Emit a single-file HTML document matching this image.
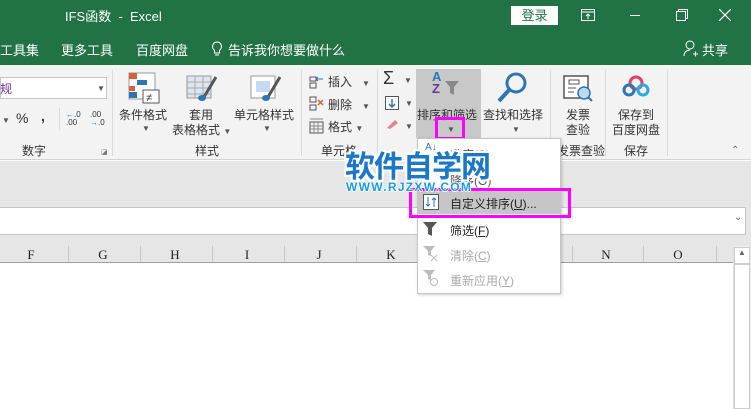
<!DOCTYPE html>
<html><head><meta charset="utf-8"><style>
*{margin:0;padding:0;box-sizing:border-box}
body{width:751px;height:409px;overflow:hidden;position:relative;background:#fff;font-family:"Liberation Sans","Noto Sans CJK SC",sans-serif;font-size:12px;color:#333}
.a{position:absolute;white-space:nowrap}
.g{color:#fff}
.t{font-size:12px;color:#333}
.sep{position:absolute;width:1px;background:#dadada}
.col{position:absolute;top:246px;height:16px;width:1px;background:#c6c6c6}
.ch{position:absolute;top:247px;font-family:"Liberation Serif",serif;font-size:13px;color:#222;width:20px;text-align:center}
.ar{font-size:8px;color:#555}
</style></head><body>
<div class="a" style="left:0;top:0;width:751px;height:65px;background:#217346"></div>
<div class="a g" style="left:65px;top:6px;font-size:13px">IFS函数 &nbsp;- &nbsp;Excel</div>
<div class="a" style="left:511px;top:6px;width:47px;height:19px;background:#fff;color:#217346;font-size:13px;text-align:center;line-height:19px">登录</div>
<svg class="a" style="left:581px;top:9px" width="14" height="12"><rect x="0.5" y="0.5" width="13" height="11" fill="none" stroke="#fff"/><line x1="0" y1="3" x2="14" y2="3" stroke="#fff"/><path d="M7 10V5M5 7l2-2 2 2" stroke="#fff" fill="none"/></svg>
<div class="a" style="left:630px;top:15px;width:10px;height:1px;background:#fff"></div>
<svg class="a" style="left:676px;top:9px" width="12" height="12"><rect x="0.5" y="2.5" width="9" height="9" fill="none" stroke="#fff"/><path d="M2.5 2.5V0.5h9v9h-2" fill="none" stroke="#fff"/></svg>
<svg class="a" style="left:719px;top:9px" width="12" height="12"><path d="M0 0L12 12M12 0L0 12" stroke="#fff" stroke-width="1.2"/></svg>
<div class="a g" style="left:0;top:40px;font-size:13px">工具集</div>
<div class="a g" style="left:61px;top:40px;font-size:13px">更多工具</div>
<div class="a g" style="left:136px;top:40px;font-size:13px">百度网盘</div>
<svg class="a" style="left:211px;top:41px" width="12" height="16"><path d="M6 1a4.5 4.5 0 0 0-2.5 8.2V12h5V9.2A4.5 4.5 0 0 0 6 1zM4 14h4" fill="none" stroke="#fff"/></svg>
<div class="a g" style="left:228px;top:40px;font-size:13px">告诉我你想要做什么</div>
<svg class="a" style="left:683px;top:40px" width="16" height="18"><circle cx="7" cy="5" r="4" fill="none" stroke="#fff"/><path d="M1 16c0-4 3-6 6-6M10 14h5M12.5 11.5v5" fill="none" stroke="#fff"/></svg>
<div class="a g" style="left:702px;top:40px;font-size:13px">共享</div>
<div class="a" style="left:0;top:65px;width:751px;height:95px;background:#f3f3f3;border-bottom:1px solid #d4d4d4"></div>
<div class="a" style="left:0;top:77px;width:107px;height:22px;background:#fff;border:1px solid #c6c6c6"></div>
<div class="a" style="left:0;top:80px;color:#7030a0">规</div>
<div class="a ar" style="left:97px;top:84px">▼</div>
<div class="a ar" style="left:2px;top:116px">▼</div>
<div class="a" style="left:16px;top:110px;font-size:14px">%</div>
<div class="a" style="left:41px;top:108px;font-size:14px;font-weight:bold">,</div>
<div class="sep" style="left:59px;top:108px;height:22px"></div>
<div class="a" style="left:66px;top:111px;font-size:8px;line-height:8px;color:#333"><span style="color:#2e75b6">←</span>.0<br>.00</div>
<div class="a" style="left:90px;top:111px;font-size:8px;line-height:8px;color:#333">.00<br><span style="color:#2e75b6">→</span>.0</div>
<div class="a t" style="left:22px;top:142px">数字</div>
<div class="a" style="left:101px;top:148px;font-size:7px;color:#777">◪</div>
<div class="sep" style="left:112px;top:70px;height:86px"></div>
<svg class="a" style="left:128px;top:72px" width="32" height="32"><rect x="1" y="1" width="26" height="26" fill="#fff" stroke="#999"/><rect x="1" y="1" width="8" height="6" fill="#d9603b"/><rect x="9" y="8" width="10" height="5" fill="#2e75b6"/><rect x="1" y="14" width="6" height="5" fill="#d9603b"/><rect x="1" y="20" width="8" height="6" fill="#2e75b6"/><rect x="15" y="18" width="16" height="13" fill="#fff" stroke="#555"/><text x="18" y="29" font-size="11" fill="#333">≠</text></svg>
<div class="a t" style="left:119px;top:106px">条件格式</div>
<div class="a ar" style="left:142px;top:124px">▼</div>
<svg class="a" style="left:186px;top:75px" width="32" height="28"><rect x="1" y="1" width="24" height="22" fill="#dce6f1" stroke="#999"/><path d="M1 7h24M1 13h24M1 19h24M9 1v22M17 1v22" stroke="#aaa"/><path d="M30 2L18 22" stroke="#555" stroke-width="3"/><ellipse cx="16" cy="23" rx="4" ry="3" fill="#2e75b6"/></svg>
<div class="a t" style="left:189px;top:106px">套用</div>
<div class="a t" style="left:172px;top:121px">表格格式 <span class="ar">▼</span></div>
<svg class="a" style="left:250px;top:75px" width="32" height="28"><rect x="1" y="1" width="24" height="22" fill="#fff" stroke="#999"/><rect x="6" y="6" width="14" height="11" fill="#c5d9f1"/><path d="M30 2L18 22" stroke="#555" stroke-width="3"/><ellipse cx="16" cy="23" rx="4" ry="3" fill="#2e75b6"/></svg>
<div class="a t" style="left:234px;top:106px">单元格样式</div>
<div class="a ar" style="left:263px;top:124px">▼</div>
<div class="a t" style="left:195px;top:142px">样式</div>
<div class="sep" style="left:301px;top:70px;height:86px"></div>
<svg class="a" style="left:309px;top:73px" width="16" height="16"><path d="M1 4h6v4H1zM1 10h6v5H1z" fill="none" stroke="#555"/><path d="M14 6H7M9 4l-2 2 2 2" stroke="#2e75b6" fill="none"/></svg>
<div class="a t" style="left:328px;top:73px">插入 &nbsp;&nbsp;<span class="ar">▼</span></div>
<svg class="a" style="left:309px;top:96px" width="16" height="16"><path d="M1 1h6v5H1zM1 9h6v5H1z" fill="none" stroke="#555"/><path d="M9 4l5 5M14 4l-5 5" stroke="#d9603b" stroke-width="1.5"/></svg>
<div class="a t" style="left:328px;top:96px">删除 &nbsp;&nbsp;<span class="ar">▼</span></div>
<svg class="a" style="left:309px;top:118px" width="16" height="16"><rect x="1" y="4" width="13" height="11" fill="none" stroke="#555"/><path d="M1 8h13M1 11h13M5 4v11M9 4v11M1 1h13" stroke="#888"/></svg>
<div class="a t" style="left:328px;top:118px">格式 <span class="ar">▼</span></div>
<div class="a t" style="left:321px;top:142px">单元格</div>
<div class="sep" style="left:377px;top:70px;height:86px"></div>
<div class="a" style="left:383px;top:68px;font-size:18px;color:#333">Σ</div>
<div class="a ar" style="left:404px;top:76px">▼</div>
<svg class="a" style="left:385px;top:96px" width="14" height="14"><rect x="0.5" y="0.5" width="13" height="13" fill="#fff" stroke="#555"/><path d="M7 3v8M4 8l3 3 3-3" stroke="#2e75b6" stroke-width="1.5" fill="none"/></svg>
<div class="a ar" style="left:405px;top:99px">▼</div>
<svg class="a" style="left:385px;top:118px" width="14" height="12"><path d="M2 10l8-8 3 3-8 6z" fill="#e9808a"/></svg>
<div class="a ar" style="left:405px;top:122px">▼</div>
<div class="a" style="left:416px;top:69px;width:65px;height:69px;background:#c8c8c8"></div>
<div class="a" style="left:432px;top:71px;font-size:13px;line-height:12px;color:#2e75b6;font-weight:bold">A<br><span style="color:#7030a0">Z</span></div>
<svg class="a" style="left:444px;top:80px" width="16" height="16"><path d="M1 1h14l-5 6v8l-4-2V7z" fill="#888"/></svg>
<div class="a t" style="left:417px;top:106px">排序和筛选</div>
<div class="a ar" style="left:447px;top:125px">▼</div>
<div class="a" style="left:435px;top:117px;width:30px;height:23px;border:3px solid #f0f"></div>
<svg class="a" style="left:497px;top:72px" width="32" height="32"><circle cx="19" cy="11" r="9" fill="none" stroke="#2e75b6" stroke-width="3"/><path d="M12 18L2 29" stroke="#2e75b6" stroke-width="4"/></svg>
<div class="a t" style="left:483px;top:106px">查找和选择</div>
<div class="a ar" style="left:512px;top:125px">▼</div>
<div class="sep" style="left:550px;top:70px;height:86px"></div>
<svg class="a" style="left:563px;top:75px" width="32" height="28"><rect x="1" y="1" width="24" height="22" fill="#fff" stroke="#555" stroke-width="1.5"/><rect x="6" y="5" width="10" height="4" fill="none" stroke="#555"/><path d="M5 13h8M5 17h6" stroke="#555"/><circle cx="21" cy="18" r="6" fill="#bcd9f0" stroke="#2e75b6" stroke-width="1.5"/><path d="M25 22l4 4" stroke="#2e75b6" stroke-width="2"/></svg>
<div class="a t" style="left:566px;top:106px">发票</div>
<div class="a t" style="left:566px;top:121px">查验</div>
<div class="a t" style="left:557px;top:142px">发票查验</div>
<div class="sep" style="left:605px;top:70px;height:86px"></div>
<svg class="a" style="left:622px;top:75px" width="28" height="24"><circle cx="14" cy="8" r="6" fill="none" stroke="#e4405f" stroke-width="3"/><circle cx="7" cy="15" r="5" fill="none" stroke="#2e75b6" stroke-width="3"/><circle cx="21" cy="15" r="5" fill="none" stroke="#2ea8e0" stroke-width="3"/></svg>
<div class="a t" style="left:618px;top:106px">保存到</div>
<div class="a t" style="left:612px;top:121px">百度网盘</div>
<div class="a t" style="left:624px;top:142px">保存</div>
<div class="sep" style="left:667px;top:70px;height:86px"></div>
<div class="a" style="left:731px;top:145px;font-size:10px;color:#666">⌃</div>
<div class="a" style="left:0;top:161px;width:751px;height:85px;background:#e6e6e6"></div>
<div class="a" style="left:0;top:207px;width:746px;height:28px;background:#fff;border-top:1px solid #c6c6c6;border-bottom:1px solid #c6c6c6;border-right:1px solid #c6c6c6"></div>
<div class="a" style="left:734px;top:212px;font-size:10px;color:#666">⌄</div>
<div class="a" style="left:0;top:246px;width:733px;height:17px;background:#e6e6e6;border-bottom:1px solid #9f9f9f"></div>
<div class="col" style="left:68px"></div><div class="col" style="left:140px"></div><div class="col" style="left:212px"></div><div class="col" style="left:284px"></div><div class="col" style="left:356px"></div><div class="col" style="left:428px"></div><div class="col" style="left:500px"></div><div class="col" style="left:572px"></div><div class="col" style="left:643px"></div><div class="col" style="left:716px"></div>
<div class="ch" style="left:21px">F</div><div class="ch" style="left:93px">G</div><div class="ch" style="left:165px">H</div><div class="ch" style="left:237px">I</div><div class="ch" style="left:309px">J</div><div class="ch" style="left:381px">K</div><div class="ch" style="left:596px">N</div><div class="ch" style="left:668px">O</div>
<div class="a" style="left:733px;top:246px;width:18px;height:163px;background:#f0f0f0;border-left:1px solid #ddd"></div>
<div class="a" style="left:734px;top:247px;width:16px;height:17px;background:#fff;border:1px solid #ccc;font-size:8px;color:#666;text-align:center">▲</div>
<div class="a" style="left:734px;top:264px;width:16px;height:145px;background:#fff;border:1px solid #ccc"></div>
<div class="a" style="left:417px;top:138px;width:144px;height:156px;background:#fff;border:1px solid #c6c6c6;box-shadow:1px 1px 3px rgba(0,0,0,.2)"></div>
<div class="a" style="left:425px;top:142px;font-size:10px;color:#2e75b6">A↓</div>
<div class="a t" style="left:450px;top:146px;color:#555">升序(S)</div>
<div class="a t" style="left:450px;top:172px;color:#555">降序(O)</div>
<div class="a" style="left:418px;top:191px;width:142px;height:23px;background:#c6c6c6"></div>
<svg class="a" style="left:423px;top:194px" width="16" height="16"><rect x="0.5" y="0.5" width="15" height="15" fill="#fff" stroke="#555"/><path d="M5 3v9M3 10l2 2 2-2M11 13V4M9 6l2-2 2 2" stroke="#2e75b6" fill="none"/></svg>
<div class="a t" style="left:450px;top:195px;color:#222">自定义排序(<u>U</u>)...</div>
<div class="a" style="left:409px;top:188px;width:162px;height:30px;border:3px solid #f0f"></div>
<svg class="a" style="left:423px;top:222px" width="14" height="14"><path d="M0 0h14l-5 6v8l-4-2V6z" fill="#555"/></svg>
<div class="a t" style="left:450px;top:222px;color:#222">筛选(<u>F</u>)</div>
<svg class="a" style="left:423px;top:246px" width="16" height="16"><path d="M0 0h12l-4 5v5l-3-1V5z" fill="#bbb"/><path d="M8 9l6 6M14 9l-6 6" stroke="#bbb"/></svg>
<div class="a t" style="left:450px;top:247px;color:#aaa">清除(<u>C</u>)</div>
<svg class="a" style="left:423px;top:270px" width="16" height="16"><path d="M0 0h12l-4 5v5l-3-1V5z" fill="#bbb"/><circle cx="11" cy="12" r="3.5" fill="none" stroke="#bbb"/></svg>
<div class="a t" style="left:450px;top:272px;color:#aaa">重新应用(<u>Y</u>)</div>
<div class="a" style="left:345px;top:146px;font-family:'WenQuanYi Zen Hei','Noto Sans CJK SC',sans-serif;font-size:30px;font-weight:bold;color:#1a77c9;-webkit-text-stroke:2px #1a77c9;paint-order:stroke fill;text-shadow:2px 0 #fff,-2px 0 #fff,0 2px #fff,0 -2px #fff,2px 2px #fff,-2px -2px #fff,2px -2px #fff,-2px 2px #fff;line-height:36px;letter-spacing:-1px">软件自学网</div>
<div class="a" style="left:346px;top:180px;font-size:12px;font-weight:bold;color:#1a9ae0;letter-spacing:1.3px;text-shadow:1px 0 #fff,-1px 0 #fff,0 1px #fff,0 -1px #fff">WWW.RJZXW.COM</div>
</body></html>
